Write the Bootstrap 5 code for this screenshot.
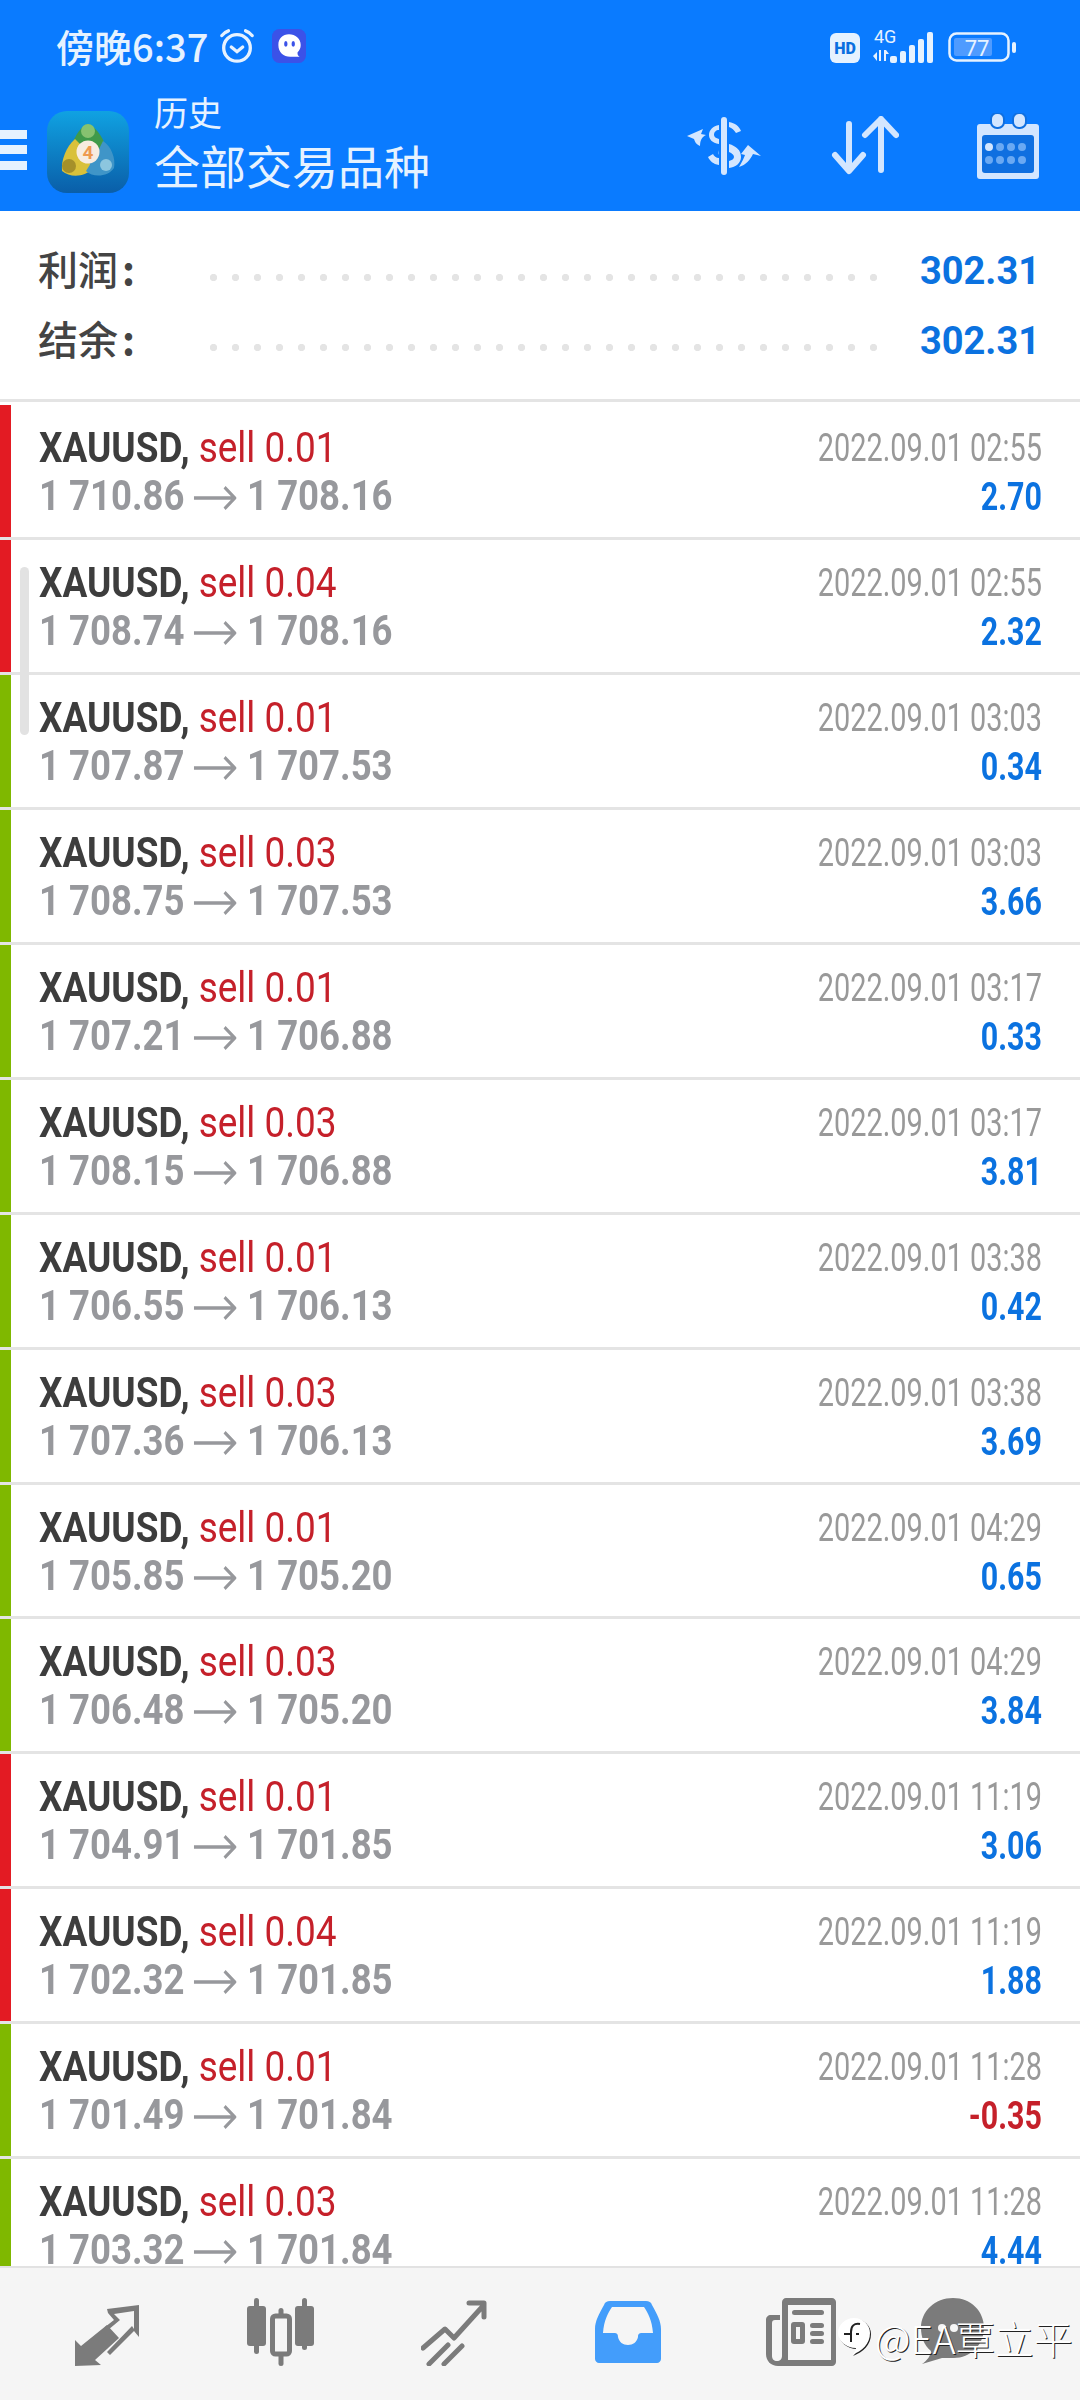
<!DOCTYPE html>
<html lang="zh">
<head>
    <meta charset="utf-8">
    <title>历史</title>
    <link href="https://cdn.jsdelivr.net/npm/bootstrap@5.3.0/dist/css/bootstrap.min.css" rel="stylesheet">
    <style>
        html, body { margin: 0; background: #fff; }
        body { font-family: Roboto, "Noto Sans CJK SC", sans-serif; }
        .screen { width: 1080px; height: 2400px; overflow: hidden; position: relative; }

        /* blue top area */
        .top-area { height: 211px; background: #0a7bff; color: #e6f2ff; flex: none; }
        .status-row { height: 92px; padding: 21px 62px 0 56px; }
        .clock-text { font-size: 38px; line-height: 50px; font-weight: 500; font-family: "Noto Sans CJK SC", sans-serif; }
        .title-row { height: 119px; }
        .menu-bars { width: 27px; height: 40px; margin-top: -4px; }
        .menu-bars i { display: block; height: 9px; background: #e6f2ff; }
        .app-logo { margin-left: 20px; width: 82px; height: 82px; }
        .title-text { margin-left: 25px; font-family: "Noto Sans CJK SC", sans-serif; }
        .title-sub { font-size: 34px; line-height: 36px; margin-top: -14px; }
        .title-main { font-size: 46px; line-height: 62px; padding-top: 3px; }

        /* profit and balance */
        .summary { height: 191px; padding: 25px 40px 0 38px; flex: none; border-bottom: 3px solid #e4e4e4; margin-bottom: 3px; }
        .sum-line { height: 70px; }
        .sum-label { width: 172px; flex: none; margin-top: -7px; font-family: "Noto Sans CJK SC", sans-serif; font-size: 40px; line-height: 70px; color: #444; font-weight: 500; }
        .sum-label b { font-weight: 700; margin-left: 4px; }
        .dot-fill { width: 674px; height: 7px; margin-top: 13px; background: radial-gradient(circle at 3.5px 3.5px, #e4e4e4 3.4px, transparent 3.9px) 0 0 / 22px 7px repeat-x; }
        .sum-value { margin-left: auto; font-size: 38px; font-weight: 700; color: #0b72e0; line-height: 70px; }

        /* order rows */
        .order-list { flex: 1 1 auto; min-height: 0; overflow: hidden; }
        .order-row { height: 134.95px; border-bottom: 3px solid #e4e4e4; }
        .side-bar { width: 11px; flex: none; }
        .bar-loss { background: #e31b23; }
        .bar-gain { background: #7fb800; }
        .order-body { padding: 19px 38px 0 28px; line-height: 48px; }
        .narrow-left, .narrow-right { display: block; white-space: nowrap; }
        .narrow-left { transform-origin: left center; }
        .narrow-right { transform-origin: right center; text-align: right; }
        .symbol { font-size: 42px; font-weight: 700; color: #3d3d3d; transform: scaleX(.88); }
        .side-lot { font-weight: 400; color: #c5202a; }
        .prices { font-size: 42px; font-weight: 700; color: #97989c; transform: scaleX(.87); }
        .price-arrow { width: 49px; height: 28px; margin: 0 12px 0 11px; vertical-align: -2px; }
        .open-time { font-size: 38px; color: #999; transform: scaleX(.76); }
        .profit { font-size: 38px; font-weight: 700; color: #0b72e0; transform: scaleX(.8); padding-top: 1px; }
        .profit.is-loss { color: #c5202a; }
        .scroll-thumb { position: absolute; left: 20px; top: 567px; width: 9px; height: 168px; background: #e2e2e2; border-radius: 5px; }

        /* bottom tabs */
        .tab-bar { height: 134px; flex: none; background: #f5f5f5; border-top: 2px solid #e2e2e2; position: relative; }
        .tab-icon { position: absolute; }
        .credit { position: absolute; left: 875px; top: 2314px; font-size: 39px; line-height: 46px; color: #fff; font-family: "Noto Sans CJK SC", sans-serif;
                  text-shadow: 1px 1px 0 #222; font-weight: 300; white-space: nowrap; }
        .credit-mark { position: absolute; left: 836px; top: 2316px; filter: drop-shadow(1px 1px 0 #222); }
    </style>
</head>
<body>
<div class="screen d-flex flex-column">
    <div class="top-area">
        <div class="status-row d-flex align-items-start">
            <span class="clock-text">傍晚6:37</span>
            <svg width="38" height="38" viewBox="0 0 40 40" fill="none" stroke="#e6f2ff" stroke-width="3.5" stroke-linecap="round" style="margin-top:6px;margin-left:10px">
                <circle cx="20" cy="22" r="14"/><path d="M14 21l6 5 6-5M4 9c2-3 4-4 7-5M36 9c-2-3-4-4-7-5"/>
            </svg>
            <svg width="34" height="34" viewBox="0 0 32 32" style="margin-top:8px;margin-left:16px">
                <rect width="32" height="32" rx="7" fill="#3b52e8"/>
                <path d="M16 5c-6 0-10 4-10 10 0 7 5 11 11 11h9c-2-1-2-3-2-4 2-2 3-4 3-7C27 9 22 5 16 5z" fill="#fff"/>
                <ellipse cx="13" cy="14" rx="1.6" ry="2.6" fill="#3b52e8"/><ellipse cx="20" cy="14" rx="1.6" ry="2.6" fill="#3b52e8"/>
            </svg>
            <div class="ms-auto d-flex align-items-start" style="margin-top:12px">
                <svg width="30" height="30" viewBox="0 0 30 30"><rect width="30" height="30" rx="6" fill="#e6f2ff"/><text x="15" y="21" text-anchor="middle" font-family="Roboto" font-weight="900" font-size="16" fill="#0a6fe0">HD</text></svg>
                <svg width="70" height="38" viewBox="0 0 70 36" fill="#e6f2ff" style="margin-top:-6px;margin-left:10px">
                    <text x="4" y="15" font-family="Roboto" font-size="18">4G</text>
                    <path d="M3 28l4-4v9zM9 22h2v11H9zM14 22h2v11h-2zM16 22l3 4h-3z"/>
                    <rect x="20" y="28" width="7" height="7" rx="2"/><rect x="30" y="23" width="6" height="12" rx="2"/><rect x="39" y="17" width="6" height="18" rx="2"/><rect x="48" y="11" width="6" height="24" rx="2"/><rect x="57" y="4" width="6" height="31" rx="2"/>
                </svg>
                <svg width="70" height="32" viewBox="0 0 70 32" style="margin-top:-1px;margin-left:8px">
                    <rect x="1.5" y="1.5" width="59" height="27" rx="7" fill="none" stroke="#e6f2ff" stroke-width="2.5"/>
                    <rect x="6" y="6" width="38" height="18" rx="2" fill="#4f9bff"/>
                    <text x="29" y="24" text-anchor="middle" font-family="Roboto" font-size="22" fill="#e6f2ff">77</text>
                    <rect x="64" y="10" width="4" height="11" rx="2" fill="#e6f2ff"/>
                </svg>
            </div>
        </div>
        <div class="title-row d-flex align-items-center">
            <div class="menu-bars d-flex flex-column justify-content-between"><i></i><i></i><i></i></div>
            <svg class="app-logo" viewBox="0 0 82 82">
                <defs><linearGradient id="logoBg" x1="0" y1="0" x2="0" y2="1"><stop offset="0" stop-color="#10a2e2"/><stop offset="1" stop-color="#0a5ea8"/></linearGradient></defs>
                <rect width="82" height="82" rx="20" fill="url(#logoBg)"/>
                <!-- three figures around the version badge -->
                <path d="M41 13c10 4 17 17 19 28H24c1-11 7-24 17-28z" fill="#3f9a4a"/><circle cx="41" cy="20" r="7" fill="#86c270"/>
                <path d="M28 28c-9 8-14 21-13 32 8 7 23 6 30-2L36 36z" fill="#d9c13a"/><circle cx="22" cy="55" r="7" fill="#a5902a"/>
                <path d="M56 30c8 5 13 17 11 27-6 9-21 10-28 3l10-16z" fill="#3f95c8"/><circle cx="59" cy="54" r="6" fill="#8cc6df"/>
                <circle cx="41" cy="41" r="11.500" fill="#f7ece0"/>
                <text x="41" y="48" text-anchor="middle" font-family="Roboto" font-weight="700" font-size="19" fill="#ee9a4f">4</text>
            </svg>
            <div class="title-text">
                <div class="title-sub">历史</div>
                <div class="title-main">全部交易品种</div>
            </div>
            <div class="ms-auto d-flex align-items-center" style="margin-right:41px;margin-top:-12px">
                <svg width="74" height="58" viewBox="0 0 74 58" fill="#d3e6ff">
                    <rect x="34" y="0" width="6" height="58" rx="3"/>
                    <path d="M32 8c-6 1-10 5-10 10 0 4 3 8 10 9v-5c-3-1-5-2-5-4 0-3 2-5 5-5z"/>
                    <path d="M42 5c6 1 10 4 12 9l-5 2c-2-3-4-5-7-6zM42 27c7 2 12 6 12 13 0 6-5 10-12 11v-7c3-1 5-2 5-4s-2-4-5-5zM32 33v15c-6-1-9-4-11-8l5-3c1 2 3 4 6 4v-3c-1-2 0-4 0-5z"/>
                    <path d="M0 19l16-7-2 5 5 1c-4 2-6 5-6 11-4-2-5-4-6-7z"/>
                    <path d="M72 41l-13-11-7 9 4 1c-2 5-3 7-6 12 7-2 11-7 14-13z" transform="translate(2 -2)"/>
                </svg>
                <svg style="margin-left:70px" width="68" height="60" viewBox="0 0 68 60" fill="none" stroke="#d3e6ff" stroke-width="6" stroke-linecap="round" stroke-linejoin="round">
                    <path d="M18 8v46M4 39l14 16 14-16M50 54V3M34 19L50 3l15 16"/>
                </svg>
                <svg style="margin-left:78px" width="62" height="66" viewBox="0 0 62 66">
                    <path d="M3 11h56a3 3 0 0 1 3 3v49a3 3 0 0 1-3 3H3a3 3 0 0 1-3-3V14a3 3 0 0 1 3-3z" fill="#d3e6ff"/>
                    <rect x="5" y="22" width="52" height="38" rx="3" fill="#0f6fe0"/>
                    <rect x="14" y="0" width="13" height="15" rx="6" fill="#d3e6ff" stroke="#0f6fe0" stroke-width="2"/>
                    <rect x="36" y="0" width="13" height="15" rx="6" fill="#d3e6ff" stroke="#0f6fe0" stroke-width="2"/>
                    <g fill="#6aa9f3"><circle cx="34" cy="34" r="4"/><circle cx="45" cy="34" r="4"/><circle cx="23" cy="34" r="4"/><circle cx="12" cy="47" r="4"/><circle cx="23" cy="47" r="4"/><circle cx="34" cy="47" r="4"/><circle cx="45" cy="47" r="4"/></g>
                    <circle cx="12" cy="34" r="4" fill="#d3e6ff"/>
                </svg>
            </div>
        </div>
    </div>

    <div class="summary">
        <div class="sum-line d-flex align-items-center"><span class="sum-label">利润<b>:</b></span><span class="dot-fill"></span><span class="sum-value">302.31</span></div>
        <div class="sum-line d-flex align-items-center"><span class="sum-label">结余<b>:</b></span><span class="dot-fill"></span><span class="sum-value">302.31</span></div>
    </div>

    <div class="order-list" id="orders"></div>

    <div class="tab-bar">
        <svg class="tab-icon" style="left:75px;top:36px" width="70" height="62" viewBox="0 0 70 62" fill="#7b7b7b">
            <path d="M0 62V36l6 6 26-21 12 13-24 22 6 5z"/>
            <path d="M33 9L32 5 64 1v32l-5-6-24 24-3-3 25-26 2 3V7l-20 3 6 6-12 10-3-3 9-7z"/>
        </svg>
        <svg class="tab-icon" style="left:246px;top:30px" width="70" height="68" viewBox="0 0 68 68" fill="#7b7b7b">
            <rect x="0" y="8" width="19" height="40" rx="3"/><rect x="7" y="0" width="5" height="50" rx="2.5"/>
            <rect x="7" y="46" width="5" height="10" rx="2.5"/>
            <rect x="25.500" y="18" width="17" height="38" rx="3" fill="none" stroke="#7b7b7b" stroke-width="5"/>
            <rect x="31.500" y="10" width="5" height="10" rx="2.500"/><rect x="31.500" y="54" width="5" height="14" rx="2.500"/>
            <rect x="48" y="8" width="19" height="40" rx="3"/><rect x="55" y="0" width="5" height="52" rx="2.500"/>
        </svg>
        <svg class="tab-icon" style="left:421px;top:32px" width="66" height="66" viewBox="0 0 66 66" fill="none" stroke="#7b7b7b" stroke-width="5" stroke-linecap="round" stroke-linejoin="round">
            <path d="M2 48l22-19 9 9 29-32M48 3h15v14M8 64l19-19M23 64l18-18"/>
        </svg>
        <svg class="tab-icon" style="left:595px;top:33px" width="66" height="62" viewBox="0 0 66 62">
            <path d="M15 0h36c3 0 5 1 6 4 5 9 9 16 9 24v30c0 2-2 4-4 4H4c-2 0-4-2-4-4V28C0 20 4 13 9 4c1-3 3-4 6-4z" fill="#439dfb"/>
            <path d="M17 6h32c4 6 8 13 9 26H47c-3 0-4 1-4 4-1 5-5 8-10 8s-9-3-10-8c0-3-1-4-4-4H8C9 19 13 12 17 6z" fill="#f5f5f5"/>
        </svg>
        <svg class="tab-icon" style="left:766px;top:30px" width="70" height="68" viewBox="0 0 70 68" fill="#7b7b7b">
            <path d="M20 0h46c2 0 4 2 4 4v60c0 2-2 4-4 4H12C5 68 0 63 0 56V22c0-3 2-5 5-5h9v5H9c-2 0-3 1-3 3v33c0 3 2 5 5 5s5-2 5-5V4c0-2 2-4 4-4zm2 7v55h43V7z"/>
            <rect x="26" y="12" width="32" height="5" rx="2.500"/><rect x="25" y="24" width="14" height="22" rx="3"/><rect x="30" y="29" width="4" height="12" fill="#f5f5f5"/>
            <rect x="44" y="25" width="14" height="5" rx="2.500"/><rect x="44" y="33" width="14" height="5" rx="2.500"/><rect x="44" y="41" width="14" height="5" rx="2.500"/>
        </svg>
        <svg class="tab-icon" style="left:920px;top:30px" width="66" height="68" viewBox="0 0 66 68" fill="#7b7b7b">
            <path d="M33 0c18 0 31 13 31 30S50 60 34 60H22L2 66c5-3 9-9 9-13C4 47 1 39 1 30 1 13 15 0 33 0z"/>
            <circle cx="22" cy="30" r="4" fill="#f5f5f5"/><circle cx="34" cy="30" r="4" fill="#f5f5f5"/>
        </svg>
    </div>

    <div class="scroll-thumb"></div>
    <svg class="credit-mark" width="36" height="44" viewBox="0 0 36 44"><path d="M18 2c9 0 16 7 16 15 0 11-8 18-18 22 3-3 4-5 4-7-10 0-18-7-18-15C2 9 9 2 18 2z" fill="#fff"/><path d="M24 8c-6-1-9 2-9 8v10M8 18h8M20 18h3" fill="none" stroke="#222" stroke-width="2"/></svg>
    <span class="credit">@EA覃立平</span>
</div>

<script>
    // 订单列表: [盈亏标记, 手数, 开仓价, 平仓价, 时间, 盈亏]
    const orders = [
        ["loss", "0.01", "1 710.86", "1 708.16", "02:55", "2.70"],
        ["loss", "0.04", "1 708.74", "1 708.16", "02:55", "2.32"],
        ["gain", "0.01", "1 707.87", "1 707.53", "03:03", "0.34"],
        ["gain", "0.03", "1 708.75", "1 707.53", "03:03", "3.66"],
        ["gain", "0.01", "1 707.21", "1 706.88", "03:17", "0.33"],
        ["gain", "0.03", "1 708.15", "1 706.88", "03:17", "3.81"],
        ["gain", "0.01", "1 706.55", "1 706.13", "03:38", "0.42"],
        ["gain", "0.03", "1 707.36", "1 706.13", "03:38", "3.69"],
        ["gain", "0.01", "1 705.85", "1 705.20", "04:29", "0.65"],
        ["gain", "0.03", "1 706.48", "1 705.20", "04:29", "3.84"],
        ["loss", "0.01", "1 704.91", "1 701.85", "11:19", "3.06"],
        ["loss", "0.04", "1 702.32", "1 701.85", "11:19", "1.88"],
        ["gain", "0.01", "1 701.49", "1 701.84", "11:28", "-0.35"],
        ["gain", "0.03", "1 703.32", "1 701.84", "11:28", "4.44"]
    ];
    const arrow = '<svg class="price-arrow" viewBox="0 0 50 28" fill="none" stroke="#97989c" stroke-width="3.5"><path d="M0 14h48M36 3l12 11-12 11"/></svg>';
    document.getElementById("orders").innerHTML = orders.map(o => `
        <div class="order-row d-flex">
            <div class="side-bar bar-${o[0]}"></div>
            <div class="order-body flex-grow-1 d-flex justify-content-between">
                <div>
                    <span class="narrow-left symbol">XAUUSD, <span class="side-lot">sell ${o[1]}</span></span>
                    <span class="narrow-left prices">${o[2]}${arrow}${o[3]}</span>
                </div>
                <div>
                    <span class="narrow-right open-time">2022.09.01 ${o[4]}</span>
                    <span class="narrow-right profit ${o[5][0] === "-" ? "is-loss" : ""}">${o[5]}</span>
                </div>
            </div>
        </div>`).join("");
</script>
<script src="https://cdn.jsdelivr.net/npm/bootstrap@5.3.0/dist/js/bootstrap.bundle.min.js"></script>
</body>
</html>
